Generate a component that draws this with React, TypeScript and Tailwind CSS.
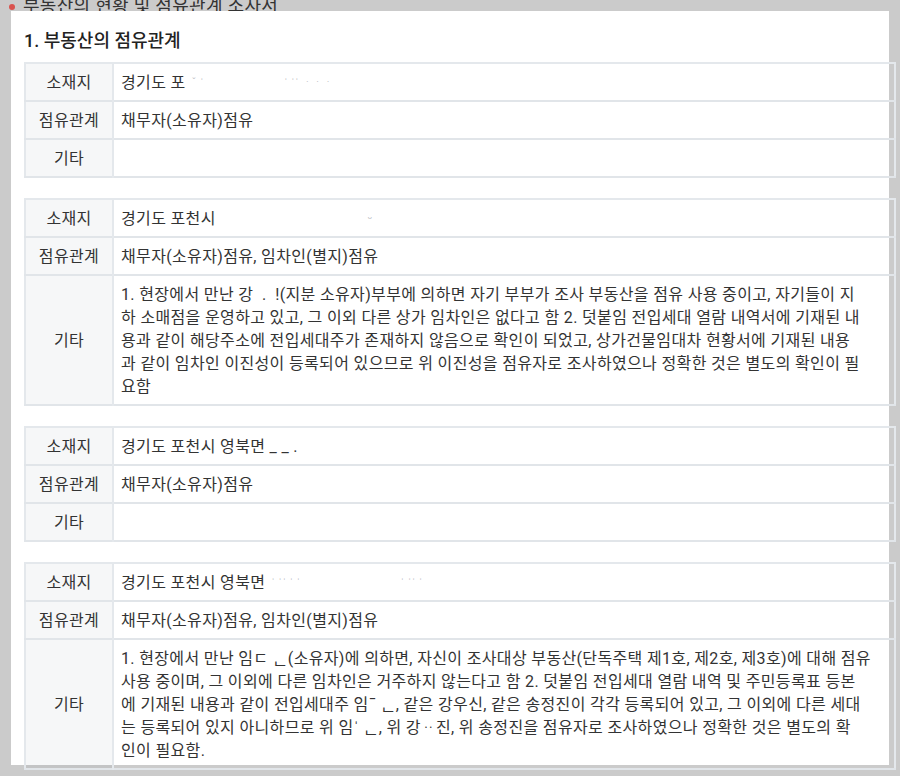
import React from "react";

type Row = { label: string; content: React.ReactNode };

const font = "font-['Roboto','Noto_Sans_CJK_KR',sans-serif]";

function Faint({ children, className = "" }: { children: React.ReactNode; className?: string }) {
  return <span className={`text-[#b9bcbf] text-[11px] align-top ${className}`}>{children}</span>;
}

function Lines({ lines }: { lines: React.ReactNode[] }) {
  return (
    <>
      {lines.map((line, i) => (
        <span key={i} className="block whitespace-nowrap">
          {line}
        </span>
      ))}
    </>
  );
}

const tables: Row[][] = [
  [
    {
      label: "소재지",
      content: (
        <>
          경기도 포<Faint className="ml-[6px]">ˇ ˈ</Faint>
          <Faint className="ml-[80px]">ˈ ˈˈ ᆞᆞᆞ</Faint>
        </>
      ),
    },
    { label: "점유관계", content: "채무자(소유자)점유" },
    { label: "기타", content: "" },
  ],
  [
    {
      label: "소재지",
      content: (
        <>
          경기도 포천시<Faint className="ml-[152px] text-[#555]">ᵕ</Faint>
        </>
      ),
    },
    { label: "점유관계", content: "채무자(소유자)점유, 임차인(별지)점유" },
    {
      label: "기타",
      content: (
        <Lines
          lines={[
            "1. 현장에서 만난 강 \u00a0. \u00a0!(지분 소유자)부부에 의하면 자기 부부가 조사 부동산을 점유 사용 중이고, 자기들이 지",
            "하 소매점을 운영하고 있고, 그 이외 다른 상가 임차인은 없다고 함 2. 덧붙임 전입세대 열람 내역서에 기재된 내",
            "용과 같이 해당주소에 전입세대주가 존재하지 않음으로 확인이 되었고, 상가건물임대차 현황서에 기재된 내용",
            "과 같이 임차인 이진성이 등록되어 있으므로 위 이진성을 점유자로 조사하였으나 정확한 것은 별도의 확인이 필",
            "요함",
          ]}
        />
      ),
    },
  ],
  [
    { label: "소재지", content: "경기도 포천시 영북면 _ _ ." },
    { label: "점유관계", content: "채무자(소유자)점유" },
    { label: "기타", content: "" },
  ],
  [
    {
      label: "소재지",
      content: (
        <>
          경기도 포천시 영북면<Faint className="ml-[6px]">ˈ ˈˈ ˈ ˈ</Faint>
          <Faint className="ml-[100px]">ˈ ˈˈ ˈ</Faint>
        </>
      ),
    },
    { label: "점유관계", content: "채무자(소유자)점유, 임차인(별지)점유" },
    {
      label: "기타",
      content: (
        <Lines
          lines={[
            "1. 현장에서 만난 임ㄷ ᆫ(소유자)에 의하면, 자신이 조사대상 부동산(단독주택 제1호, 제2호, 제3호)에 대해 점유",
            "사용 중이며, 그 이외에 다른 임차인은 거주하지 않는다고 함 2. 덧붙임 전입세대 열람 내역 및 주민등록표 등본",
            "에 기재된 내용과 같이 전입세대주 임ˉ ᆫ, 같은 강우신, 같은 송정진이 각각 등록되어 있고, 그 이외에 다른 세대",
            "는 등록되어 있지 아니하므로 위 임ˈ ᆫ, 위 강ᆢ진, 위 송정진을 점유자로 조사하였으나 정확한 것은 별도의 확",
            "인이 필요함.",
          ]}
        />
      ),
    },
  ],
];

export default function App() {
  return (
    <div className={`h-[776px] overflow-hidden bg-[#cbcbcb] text-[#333] ${font}`}>
      {/* 잘린 상단 제목 */}
      <div className="h-[11px] overflow-hidden">
        <div className="mt-[-7px] flex items-center pl-[9px] text-[18px] leading-[26px] tracking-[0.3px] text-[#333]">
          <span className="mr-[8px] mt-[2px] h-[6px] w-[6px] rounded-full bg-[#d9534f]" />
          부동산의 현황 및 점유관계 조사서
        </div>
      </div>

      <div className="ml-[11px] h-[754px] w-[878px] bg-white pl-[13px] pt-[17px]">
        <h2 className="text-[18px] font-medium leading-[26px] text-[#222]">
          1. 부동산의 점유관계
        </h2>

        <div className="mt-[8px] space-y-[20px]">
          {tables.map((rows, t) => (
            <table
              key={t}
              className="w-[872px] table-fixed border-collapse border-2 border-[#e4e8ec] text-[16px] tracking-[0.35px]"
            >
              <colgroup>
                <col className="w-[88px]" />
                <col />
              </colgroup>
              <tbody>
                {rows.map((row) => (
                  <tr key={row.label} className="border-b-2 border-[#e1e5e9]">
                    <th className="border-r-2 border-[#e4e8ec] bg-[rgba(0,30,60,0.035)] py-[6.5px] text-center align-middle font-normal leading-[23px] text-[#333]">
                      {row.label}
                    </th>
                    <td className="py-[6.5px] pl-[7px] pr-[8px] text-left leading-[23px] text-[#333]">
                      {row.content}
                    </td>
                  </tr>
                ))}
              </tbody>
            </table>
          ))}
        </div>
      </div>
    </div>
  );
}
